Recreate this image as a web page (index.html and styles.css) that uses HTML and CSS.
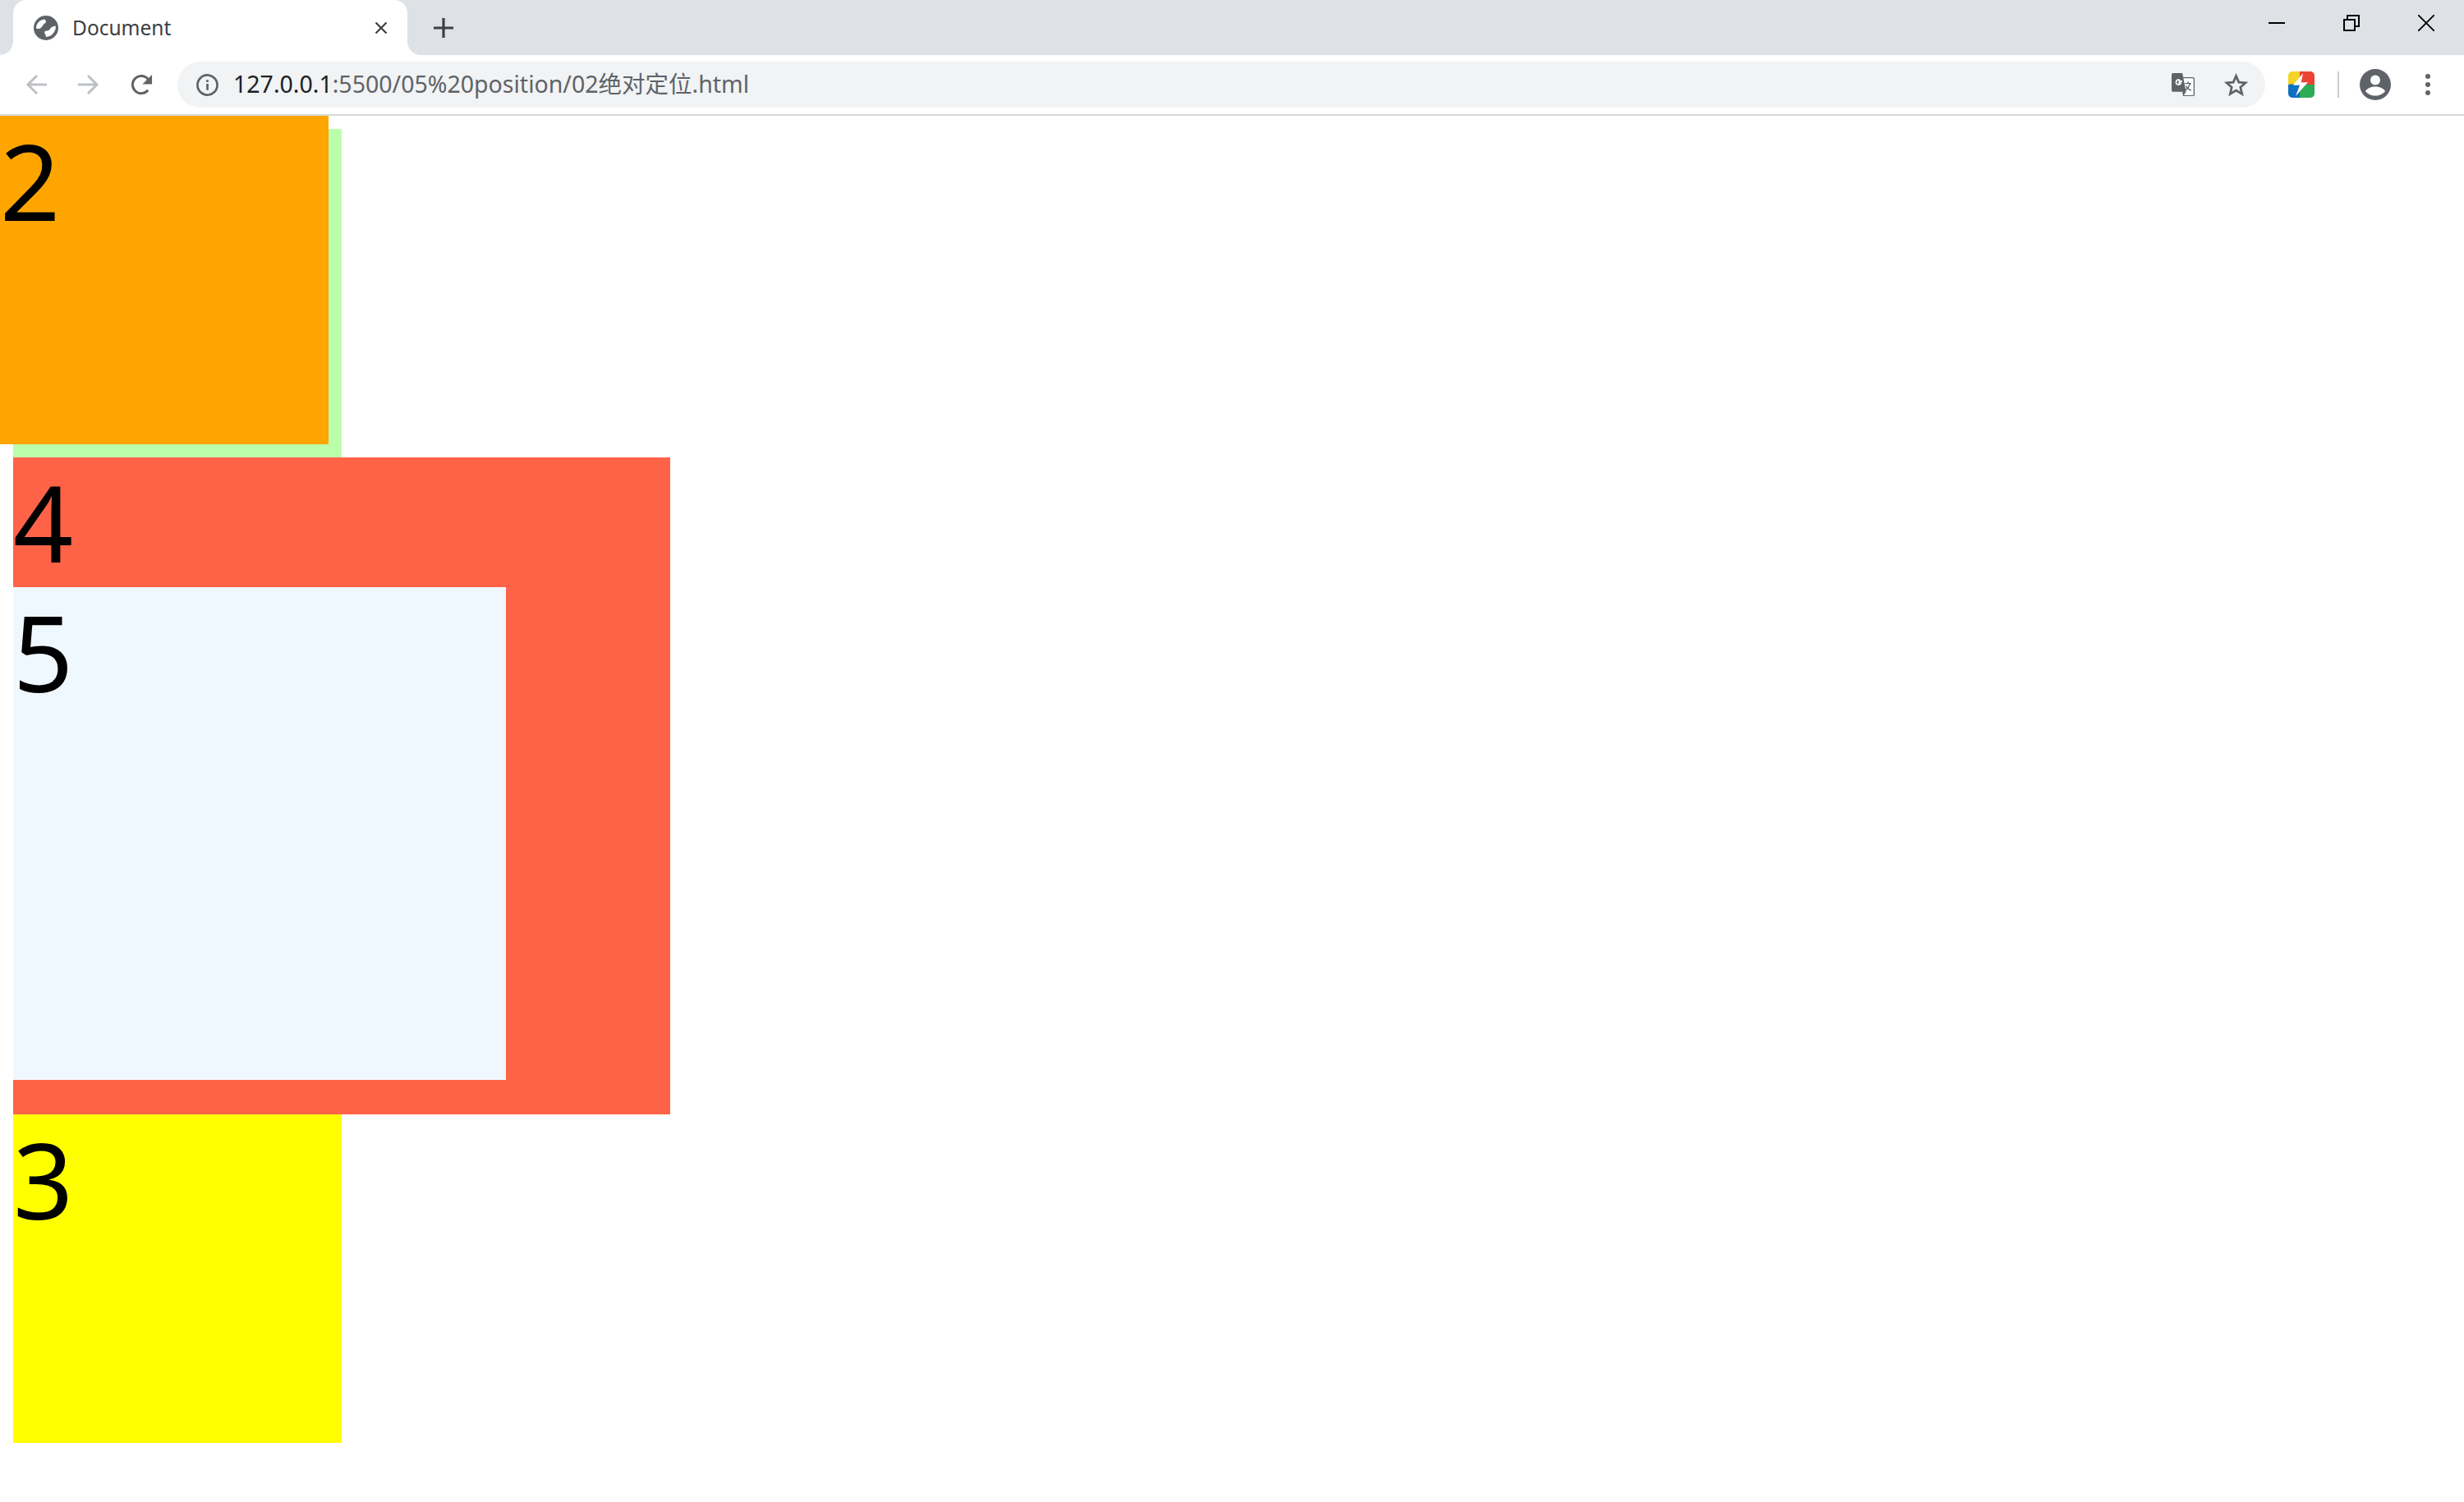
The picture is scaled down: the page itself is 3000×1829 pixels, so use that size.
FILE: index.html
```html
<!DOCTYPE html>
<html lang="en">
<head>
    <meta charset="UTF-8">
    <title>Document</title>
    <link rel="stylesheet" href="styles.css">
</head>
<body>
    <header class="chrome">
        <div class="tabstrip">
            <div class="tab">
                <svg class="tab-favicon" viewBox="0 0 30 30" width="30" height="30">
                    <circle cx="15" cy="15" r="15" fill="#5f6368"/>
                    <path d="M3 15.500C3 10 7 5 13 4.500c2 1.500 3 3 1 4.500-3 1.500-3 5-6 6.500-2 1-3.500.5-5 0z" fill="#fff"/>
                    <path d="M27 13c0 4-2 8-5 10.500-2 1.500-5 2.500-7 2.500 0-3-2-4-2-6 1-2 4-1 6-2.500 2-2.500 4-5.500 8-4.500z" fill="#fff"/>
                </svg>
                <span class="tab-title">Document</span>
                <svg class="tab-close" viewBox="0 0 16 16" width="16" height="16">
                    <path d="M1.500 1.500l13 13M14.500 1.500l-13 13" stroke="#3c4043" stroke-width="2.200" fill="none"/>
                </svg>
            </div>
            <svg class="new-tab" viewBox="0 0 24 24" width="24" height="24">
                <path d="M12 0v24M0 12h24" stroke="#3c4043" stroke-width="3.200" fill="none"/>
            </svg>
            <div class="window-controls">
                <svg viewBox="0 0 20 20" width="20" height="20"><path d="M0 10h20" stroke="#000" stroke-width="2"/></svg>
                <svg viewBox="0 0 20 20" width="20" height="20"><path d="M1 6h13v13H1zM5 6V1h14v13h-5" stroke="#000" stroke-width="2" fill="none"/></svg>
                <svg viewBox="0 0 20 20" width="20" height="20"><path d="M0 0l20 20M20 0L0 20" stroke="#000" stroke-width="1.800" fill="none"/></svg>
            </div>
        </div>
        <div class="toolbar">
            <svg class="nav-back" viewBox="0 0 26 26" width="26" height="26">
                <path d="M26 13H3M14 2L3 13l11 11" stroke="#bdc1c6" stroke-width="3" fill="none"/>
            </svg>
            <svg class="nav-forward" viewBox="0 0 26 26" width="26" height="26">
                <path d="M0 13h23M12 2l11 11-11 11" stroke="#bdc1c6" stroke-width="3" fill="none"/>
            </svg>
            <svg class="nav-reload" viewBox="0 0 28 28" width="27" height="27">
                <path d="M22 20.500a11 11 0 1 1 .3-13.500" stroke="#5f6368" stroke-width="3" fill="none"/>
                <path d="M27 1v12H15z" fill="#5f6368"/>
            </svg>
            <div class="omnibox">
                <svg class="info-icon" viewBox="0 0 28 28" width="27" height="27">
                    <circle cx="14" cy="14" r="12.500" stroke="#5f6368" stroke-width="2.800" fill="none"/>
                    <path d="M14 12.500v8M14 7.500v2.800" stroke="#5f6368" stroke-width="2.800" fill="none"/>
                </svg>
                <span class="url"><span class="url-host">127.0.0.1</span>:5500/05%20position/02绝对定位.html</span>
                <svg class="translate-icon" viewBox="0 0 30 30" width="28" height="28">
                    <path d="M13 6h15a1.500 1.500 0 0 1 1.300 1.500v21a1.500 1.500 0 0 1-1.300 1H15" fill="#fff" stroke="#5f6368" stroke-width="1.400"/>
                    <path d="M2 0h12l5 24.500H2a2 2 0 0 1-2-2V2a2 2 0 0 1 2-2z" fill="#5f6368"/>
                    <path d="M14 24l1 6 4-5.500z" fill="#5f6368"/>
                    <path d="M14 10.500h-4v2.500h2a3.200 3.200 0 1 1-1-3.600" stroke="#fff" stroke-width="1.800" fill="none"/>
                    <path d="M17.500 13.500h8M21.500 11v2.500M24 13.500c-.8 4-3.500 7-6.500 9M19 16.500c1 2.500 3.500 5 6.500 6" stroke="#5f6368" stroke-width="1.500" fill="none"/>
                </svg>
                <svg class="star-icon" viewBox="0 0 30 30" width="29" height="29">
                    <path d="M15 3.500l3.400 8 8.600.7-6.500 5.700 2 8.500-7.500-4.500-7.500 4.500 2-8.500L3 12.200l8.600-.7z" stroke="#5f6368" stroke-width="2.800" fill="none"/>
                </svg>
            </div>
            <svg class="ext-icon" viewBox="0 0 32 32" width="32" height="32">
                <defs><clipPath id="ext-clip"><rect width="32" height="32" rx="5"/></clipPath></defs>
                <g clip-path="url(#ext-clip)">
                    <path d="M0 0h20v14L0 18z" fill="#f5d327"/>
                    <path d="M14 0h18v16H14z" fill="#ea4335"/>
                    <path d="M0 16l16-2v18H0z" fill="#0f6fc0"/>
                    <path d="M14 16h18v16H14z" fill="#2dab55"/>
                    <path d="M18 2.300L5.700 16.700H14L9 30l15-16.700h-8.300z" fill="#fff"/>
                </g>
            </svg>
            <div class="toolbar-sep"></div>
            <svg class="avatar-icon" viewBox="0 0 38 38" width="38" height="38">
                <circle cx="19" cy="19" r="19" fill="#5f6368"/>
                <circle cx="19" cy="13.500" r="6" fill="#fff"/>
                <path d="M7 27c2.500-4 7.500-5.500 12-5.500S28.500 23 31 27c-2.500 3.500-7 5.500-12 5.500S9.500 30.500 7 27z" fill="#fff"/>
            </svg>
            <svg class="menu-icon" viewBox="0 0 6 26" width="6" height="26">
                <circle cx="3" cy="3" r="3" fill="#5f6368"/>
                <circle cx="3" cy="13" r="3" fill="#5f6368"/>
                <circle cx="3" cy="23" r="3" fill="#5f6368"/>
            </svg>
        </div>
    </header>

    <main class="page">
        <div class="box box-1"></div>
        <div class="box box-2">2</div>
        <div class="box box-4">
            4
            <div class="box box-5">5</div>
        </div>
        <div class="box box-3">3</div>
    </main>
</body>
</html>
```

FILE: styles.css
```css
body {
    margin: 0;
    background-color: white;
    font-family: "Noto Sans", "Noto Sans CJK SC", sans-serif;
}

.chrome {
    background-color: white;
}

.tabstrip {
    display: flex;
    align-items: center;
    height: 67px;
    background-color: #dee1e6;
}

.tab {
    position: relative;
    display: flex;
    align-items: center;
    align-self: stretch;
    width: 480px;
    box-sizing: border-box;
    margin-left: 16px;
    padding: 0 24px 0 25px;
    background-color: white;
    border-radius: 16px 16px 0 0;
}

/* little flares at the bottom corners of the tab */
.tab::before,
.tab::after {
    content: "";
    position: absolute;
    bottom: 0;
    width: 16px;
    height: 16px;
}

.tab::before {
    left: -16px;
    background: radial-gradient(circle at 0 0, #dee1e6 15.500px, white 16px);
}

.tab::after {
    right: -16px;
    background: radial-gradient(circle at 100% 0, #dee1e6 15.500px, white 16px);
}

.tab-favicon {
    margin-top: 1px;
}

.tab-title {
    flex: 1;
    margin-left: 17px;
    font-size: 24.500px;
    color: #3c4043;
}

.new-tab {
    margin-left: 32px;
}

.window-controls {
    display: flex;
    gap: 71px;
    align-self: flex-start;
    margin-left: auto;
    margin-right: 36px;
    margin-top: 18px;
}

.toolbar {
    display: flex;
    align-items: center;
    height: 72px;
    border-bottom: 2px solid #d8d9dc;
}

.nav-back {
    margin-left: 31px;
}

.nav-forward {
    margin-left: 38px;
}

.nav-reload {
    margin-left: 38px;
}

.omnibox {
    display: flex;
    align-items: center;
    flex: 1;
    height: 56px;
    margin-left: 30px;
    padding: 0 21px 0 23px;
    background-color: #f1f3f4;
    border-radius: 28px;
}

.url {
    flex: 1;
    margin-left: 18px;
    margin-top: -5px;
    font-size: 28.500px;
    color: #5f6368;
}

.url-host {
    color: #202124;
}

.star-icon {
    margin-left: 36px;
}

.ext-icon {
    margin-left: 28px;
}

.toolbar-sep {
    width: 2px;
    height: 32px;
    margin-left: 28px;
    background-color: #ccc;
}

.avatar-icon {
    margin-left: 25px;
}

.menu-icon {
    margin-left: 42px;
    margin-right: 41px;
}

.page {
    position: relative;
    padding: 16px;
}

.box {
    font-size: 128px;
    line-height: 158px;
    color: black;
}

.box-1 {
    width: 400px;
    height: 400px;
    background-color: #bbffaa;
}

.box-2 {
    position: absolute;
    top: 0;
    left: 0;
    width: 400px;
    height: 400px;
    background-color: orange;
}

.box-3 {
    width: 400px;
    height: 400px;
    background-color: yellow;
}

.box-4 {
    width: 800px;
    height: 800px;
    background-color: tomato;
}

.box-5 {
    width: 600px;
    height: 600px;
    background-color: aliceblue;
}
```
